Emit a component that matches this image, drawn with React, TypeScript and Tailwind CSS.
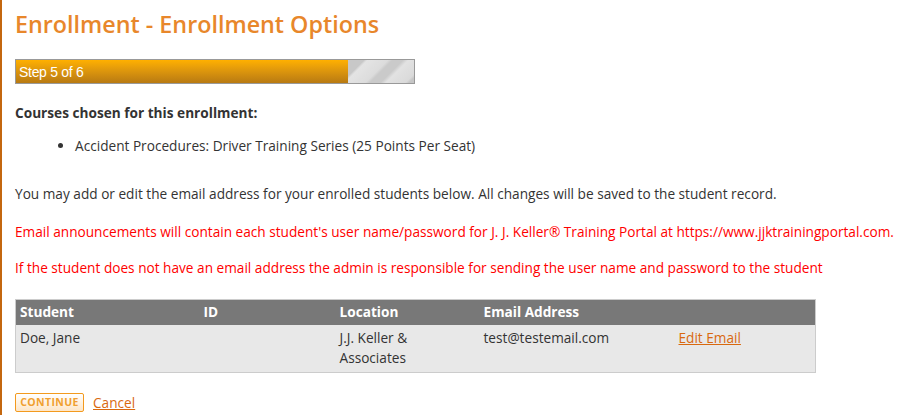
import React from 'react';

const students = [
  { name: 'Doe, Jane', id: '', location: ['J.J. Keller &', 'Associates'], email: 'test@testemail.com' },
];

export default function App() {
  return (
    <div
      className="min-h-[415px] overflow-hidden border-l-2 border-[#c4670f] bg-white pl-[13px] pt-[9px] text-[13.65px] text-[#333] leading-[20px]"
      style={{ fontFamily: '"Open Sans", "DejaVu Sans", sans-serif' }}
    >
      <h1 className="text-[23.3px] font-semibold leading-[30px] text-[#e8872b]">Enrollment - Enrollment Options</h1>

      <div className="mt-[20px] flex h-[25px] w-[400px] border border-[#999]">
        <div className="flex w-[332px] items-center bg-gradient-to-b from-[#ffb000] to-[#b87a12] pl-[3px]">
          <span
            className="text-[14px] text-white"
            style={{ fontFamily: '"Liberation Sans", Arial, sans-serif', letterSpacing: '-0.3px' }}
          >
            Step 5 of 6
          </span>
        </div>
        <div className="flex-1 bg-[linear-gradient(135deg,#c8c8c8_0%,#c8c8c8_18%,#e4e4e4_22%,#dcdcdc_45%,#cacaca_50%,#cacaca_62%,#e2e2e2_68%,#dadada_90%,#c6c6c6_94%)]" />
      </div>

      <p className="mt-[19px] font-bold">Courses chosen for this enrollment:</p>
      <ul className="mt-[13px] list-disc pl-[60px]">
        <li>Accident Procedures: Driver Training Series (25 Points Per Seat)</li>
      </ul>

      <p className="mt-[28px]">
        You may add or edit the email address for your enrolled students below. All changes will be saved to the student record.
      </p>
      <p className="mt-[18px] whitespace-nowrap text-[#ff0000]">
        Email announcements will contain each student's user name/password for J. J. Keller® Training Portal at https://www.jjktrainingportal.com.
      </p>
      <p className="mt-[16px] text-[#ff0000]">
        If the student does not have an email address the admin is responsible for sending the user name and password to the student
      </p>

      <table className="mt-[21px] w-[801px] border border-[#ccc] text-left">
        <thead>
          <tr className="h-[25px] bg-[#787878] text-white">
            <th className="w-[184px] px-[4px] py-0 font-bold">Student</th>
            <th className="w-[136px] px-[4px] py-0 font-bold">ID</th>
            <th className="w-[144px] px-[4px] py-0 font-bold">Location</th>
            <th className="w-[195px] px-[4px] py-0 font-bold">Email Address</th>
            <th className="px-[4px] py-0"></th>
          </tr>
        </thead>
        <tbody>
          {students.map((s) => (
            <tr key={s.name} className="bg-[#e8e8e8] align-top">
              <td className="px-[4px] pt-[3px] pb-[4px]">{s.name}</td>
              <td className="px-[4px] pt-[3px] pb-[4px]">{s.id}</td>
              <td className="px-[4px] pt-[3px] pb-[4px]">
                {s.location[0]}
                <br />
                {s.location[1]}
              </td>
              <td className="px-[4px] pt-[3px] pb-[4px]">{s.email}</td>
              <td className="px-[4px] pt-[3px] pb-[4px]">
                <a href="#" className="text-[#d9690f] underline">Edit Email</a>
              </td>
            </tr>
          ))}
        </tbody>
      </table>

      <div className="mt-[20px] flex items-center gap-[9px]">
        <button className="h-[19px] w-[69px] rounded-[2px] border border-[#f39a1e] bg-gradient-to-b from-white to-[#fde6c8] text-[10.5px] font-bold leading-[17px] tracking-[0.4px] text-[#f0a030]">
          CONTINUE
        </button>
        <a href="#" className="text-[#d9690f] underline">Cancel</a>
      </div>
    </div>
  );
}
